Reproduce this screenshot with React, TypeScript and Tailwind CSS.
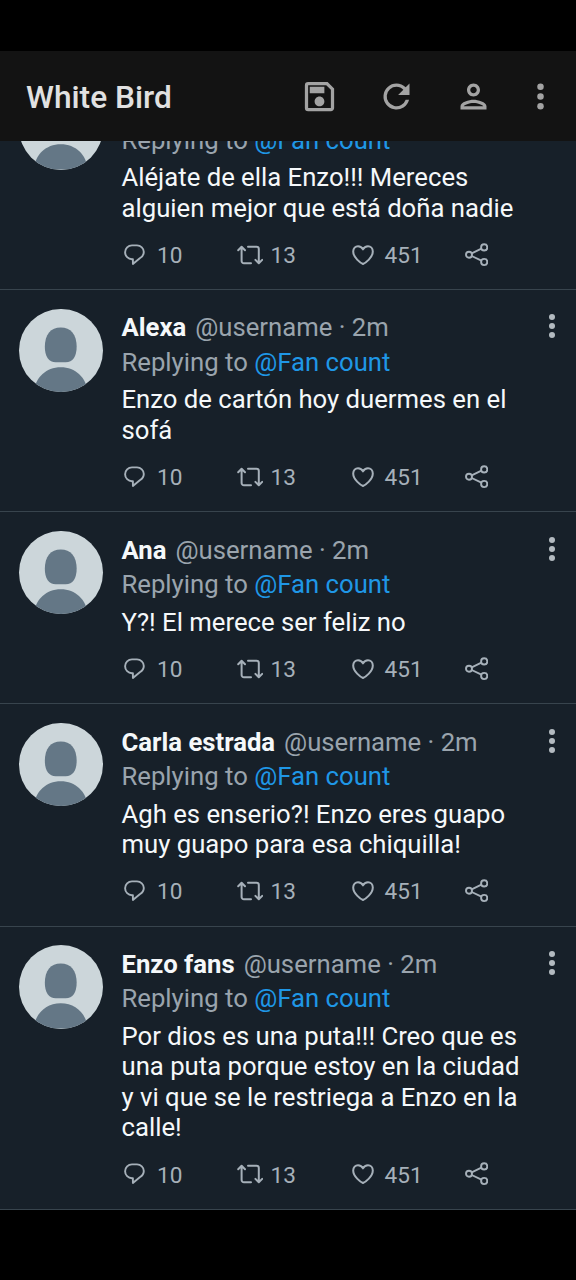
import type { ReactNode } from 'react';

type Post = {
  name?: string;
  lines: string[];
};

const posts: Post[] = [
  { lines: ['Aléjate de ella Enzo!!! Mereces', 'alguien mejor que está doña nadie'] },
  { name: 'Alexa', lines: ['Enzo de cartón hoy duermes en el', 'sofá'] },
  { name: 'Ana', lines: ['Y?! El merece ser feliz no'] },
  { name: 'Carla estrada', lines: ['Agh es enserio?! Enzo eres guapo', 'muy guapo para esa chiquilla!'] },
  {
    name: 'Enzo fans',
    lines: [
      'Por dios es una puta!!! Creo que es',
      'una puta porque estoy en la ciudad',
      'y vi que se le restriega a Enzo en la',
      'calle!',
    ],
  },
];

function HeaderIcon({ children }: { children: ReactNode }) {
  return (
    <svg viewBox="0 0 24 24" className="h-[39px] w-[39px] shrink-0" fill="#a3a3a3">
      {children}
    </svg>
  );
}

function MoreIcon({ className }: { className: string }) {
  return (
    <svg viewBox="0 0 24 24" className={className} fill="currentColor">
      <circle cx="12" cy="6" r="2" />
      <circle cx="12" cy="12" r="2" />
      <circle cx="12" cy="18" r="2" />
    </svg>
  );
}

function Header() {
  return (
    <header className="flex h-[89.5px] shrink-0 items-center bg-[#131313] pl-[26px] pr-[16px]">
      <h1 className="flex-1 pt-1 text-[31.7px] leading-9 font-medium text-[#e1e1e1]">White Bird</h1>
      <div className="flex items-center gap-[38px] pt-px">
        <HeaderIcon>
          <path d="M17 3H5a2 2 0 0 0-2 2v14a2 2 0 0 0 2 2h14c1.1 0 2-.9 2-2V7l-4-4zm2 16H5V5h11.17L19 7.83V19zm-7-7c-1.66 0-3 1.34-3 3s1.34 3 3 3 3-1.34 3-3-1.34-3-3-3zM6 6h9v4H6z" />
        </HeaderIcon>
        <HeaderIcon>
          <path d="M17.65 6.35A7.96 7.96 0 0 0 12 4a8 8 0 1 0 7.73 10h-2.08A6 6 0 1 1 12 6c1.66 0 3.14.69 4.22 1.78L13 11h7V4l-2.35 2.35z" />
        </HeaderIcon>
        <HeaderIcon>
          <path d="M12 6c1.1 0 2 .9 2 2s-.9 2-2 2-2-.9-2-2 .9-2 2-2m0 10c2.7 0 5.8 1.29 6 2H6c.23-.72 3.31-2 6-2m0-12C9.79 4 8 5.79 8 8s1.79 4 4 4 4-1.79 4-4-1.79-4-4-4zm0 10c-2.67 0-8 1.34-8 4v2h16v-2c0-2.66-5.33-4-8-4z" />
        </HeaderIcon>
        <MoreIcon className="-ml-2.5 h-[39px] w-[39px] text-[#a3a3a3]" />
      </div>
    </header>
  );
}

function Avatar() {
  return (
    <div className="mt-[18.5px] h-[83.5px] w-[83.5px] shrink-0 overflow-hidden rounded-full bg-[#ccd6da]">
      <svg viewBox="0 0 84 84" className="h-full w-full" fill="#647786">
        <path d="M42 18.5c10 0 16 7 16 19.5c0 10-4 15.5-11 15.5h-10c-7 0-11-5.5-11-15.5c0-12.5 6-19.5 16-19.5z" />
        <path d="M15 84c1-15 12-25.5 27-25.5s26 10.5 27 25.5z" />
      </svg>
    </div>
  );
}

function Actions() {
  return (
    <div className="flex h-[30px] items-center text-[22.6px] leading-none text-[#a6b0b9]">
      <div className="flex w-[115px] items-center pl-0.5">
        <svg viewBox="0 0 22 22" className="h-[22px] w-[22px]" fill="none" stroke="currentColor" strokeWidth="1.9" strokeLinejoin="round">
          <path d="M8 1.4h5a6.8 6.6 0 0 1 6.8 6.6c0 3-1.5 4.8-4 6.3L8.9 19.9v-4.7H8a6.9 6.9 0 0 1 0-13.8z" />
        </svg>
        <span className="ml-[11.5px] pt-[3px]">10</span>
      </div>
      <div className="flex w-[115px] items-center">
        <svg viewBox="0 0 26 20" className="h-5 w-[26px]" fill="none" stroke="currentColor" strokeWidth="2" strokeLinecap="round" strokeLinejoin="round">
          <path d="M1.2 5.2l3.4-3.4L8 5.2M4.6 2.5V16a2.3 2.3 0 0 0 2.3 2.3H14" />
          <path d="M11 1.8h8.5A2.3 2.3 0 0 1 21.8 4.1v13.7M18.400 14.9l3.4 3.4 3.4-3.4" />
        </svg>
        <span className="ml-2 pt-[3px]">13</span>
      </div>
      <div className="flex w-[112px] items-center">
        <svg viewBox="0 0 22 20" className="h-5 w-[22px]" fill="none" stroke="currentColor" strokeWidth="2" strokeLinejoin="round">
          <path d="M11 19C8.5 18 1.2 12.5 1.2 6.5 1.2 3.3 3.4 1.2 6 1.2c2.2 0 4 1.2 5 3.2 1-2 2.8-3.2 5-3.2 2.6 0 4.8 2.1 4.8 5.3C20.8 12.5 13.5 18 11 19z" />
        </svg>
        <span className="ml-[11px] pt-[3px]">451</span>
      </div>
      <svg viewBox="0 0 24 24" className="h-6 w-6" fill="none" stroke="currentColor" strokeWidth="1.9">
        <circle cx="5" cy="11.7" r="3" />
        <circle cx="20.2" cy="4.4" r="3.1" />
        <circle cx="20.2" cy="19" r="3.1" />
        <path d="M7.7 10.4l9.7-4.7M7.7 13l9.7 4.7" />
      </svg>
    </div>
  );
}

function PostItem({ post }: { post: Post }) {
  return (
    <article className="flex shrink-0 border-b border-[#38444d] pl-[19px]">
      <Avatar />
      <div className="ml-[19px] flex-1 pt-[22.4px] pb-[19.3px] text-[25.7px] leading-[30.4px] whitespace-nowrap">
        <div className="flex h-[34.5px] text-[#9aa4ad]">
          {post.name && (
            <>
              <span className="font-bold text-[#f5f8fa]">{post.name}</span>
              <span className="ml-[9px] flex-1">@username · 2m</span>
              <MoreIcon className="-mt-1 mr-1.5 h-9 w-9 text-[#b3bac0]" />
            </>
          )}
        </div>
        <p className="h-[37.5px] text-[#9aa4ad]">
          Replying to <span className="text-[#1f97e6]">@Fan count</span>
        </p>
        <div className="mb-[16.8px] text-[#f5f8fa]">
          {post.lines.map((line) => (
            <p key={line}>{line}</p>
          ))}
        </div>
        <Actions />
      </div>
    </article>
  );
}

export default function App() {
  return (
    <div className="flex h-[1280px] w-[576px] flex-col bg-black pt-[51px] pb-[70.4px] font-['Roboto',sans-serif]">
      <Header />
      <main className="flex min-h-0 flex-1 flex-col justify-end overflow-hidden bg-[#172029]">
        {posts.map((post) => (
          <PostItem key={post.lines[0]} post={post} />
        ))}
      </main>
    </div>
  );
}
